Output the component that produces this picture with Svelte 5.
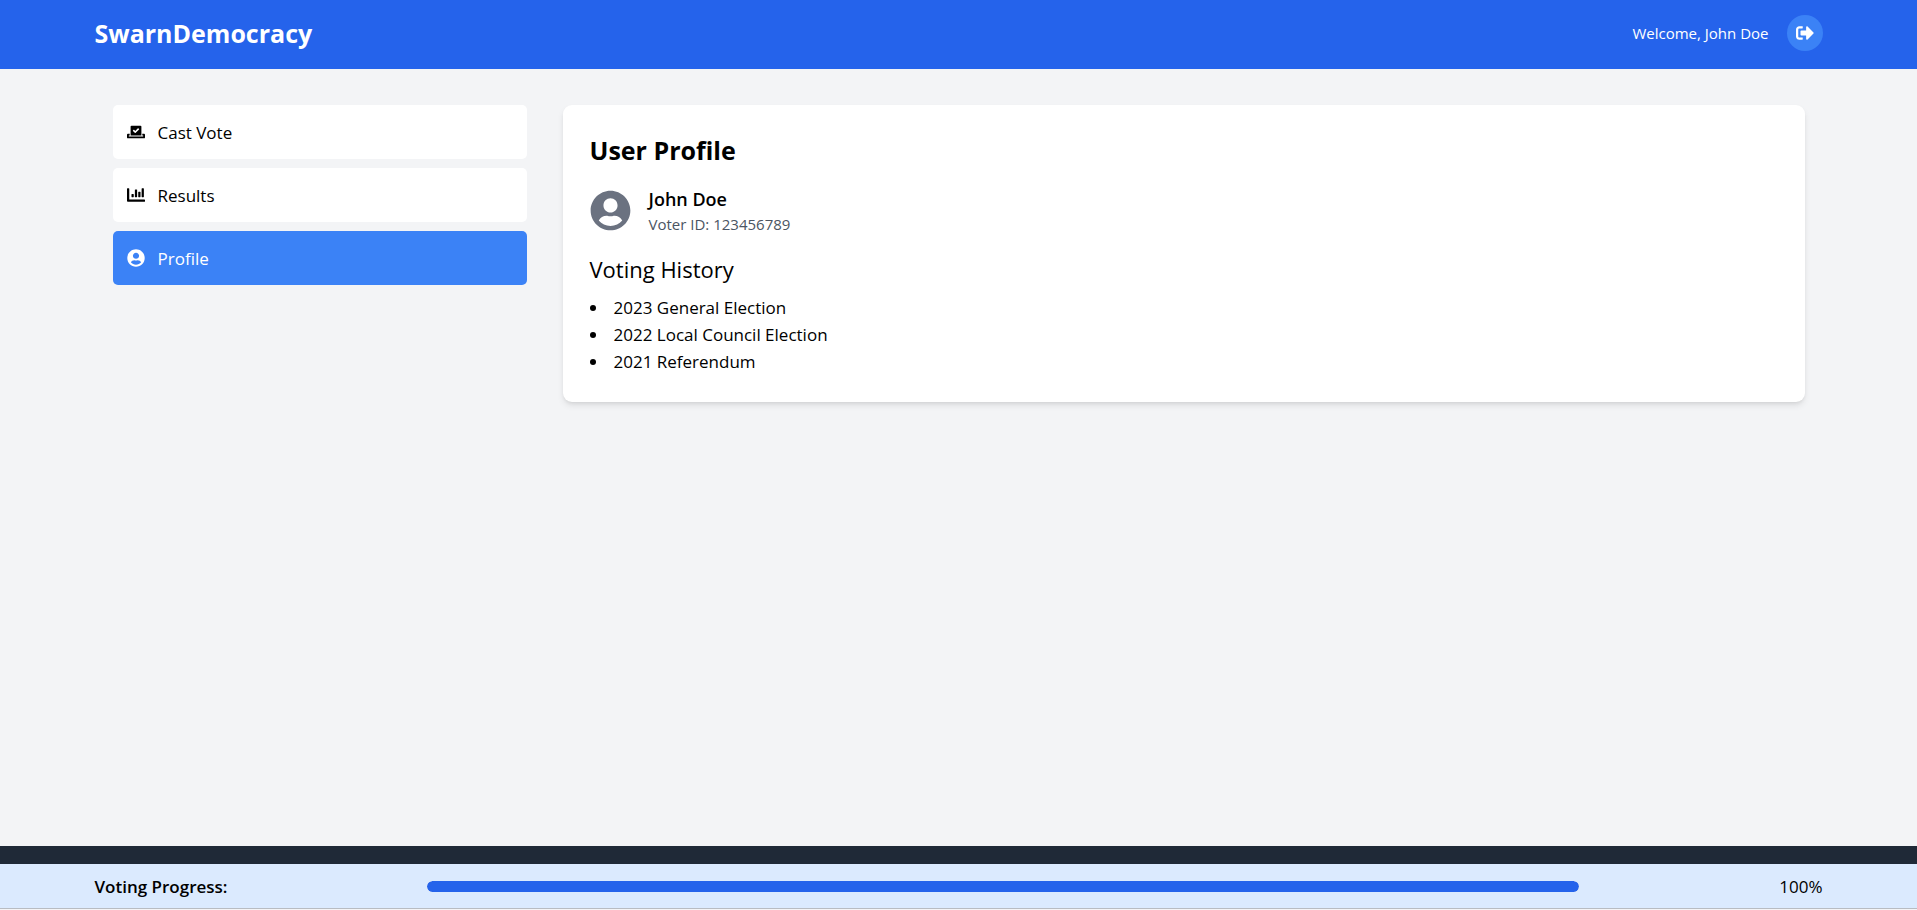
<script>
  const icons = {
    vote: {
      box: '0 0 640 512',
      d: 'M608 320h-64v64h22.4c5.3 0 9.6 3.6 9.6 8v16c0 4.4-4.3 8-9.6 8H73.6c-5.3 0-9.6-3.6-9.6-8v-16c0-4.4 4.3-8 9.6-8H96v-64H32c-17.7 0-32 14.3-32 32v96c0 17.7 14.3 32 32 32h576c17.7 0 32-14.3 32-32v-96c0-17.7-14.3-32-32-32zm-96 64V64.3c0-17.9-14.5-32.3-32.3-32.3H160.4C142.5 32 128 46.5 128 64.3V384h384zM211.2 202l25.5-25.3c4.2-4.2 11-4.2 15.2.1l41.3 41.6 95.2-94.4c4.2-4.2 11-4.2 15.2.1l25.3 25.5c4.2 4.2 4.2 11-.1 15.2L300.5 292c-4.2 4.2-11 4.2-15.2-.1l-74.1-74.7c-4.3-4.2-4.2-11 0-15.2z'
    },
    chart: {
      box: '0 0 512 512',
      d: 'M332.8 320h38.4c6.4 0 12.8-6.4 12.8-12.8V172.8c0-6.4-6.4-12.8-12.8-12.8h-38.4c-6.4 0-12.8 6.4-12.8 12.8v134.4c0 6.4 6.4 12.8 12.8 12.8zm96 0h38.4c6.4 0 12.8-6.4 12.8-12.8V76.8c0-6.4-6.4-12.8-12.8-12.8h-38.4c-6.4 0-12.8 6.4-12.8 12.8v230.4c0 6.4 6.4 12.8 12.8 12.8zm-288 0h38.4c6.4 0 12.8-6.4 12.8-12.8v-70.4c0-6.4-6.4-12.8-12.8-12.8h-38.4c-6.4 0-12.8 6.4-12.8 12.8v70.4c0 6.4 6.4 12.8 12.8 12.8zm96 0h38.4c6.4 0 12.8-6.4 12.8-12.8V108.8c0-6.4-6.4-12.8-12.8-12.8h-38.4c-6.4 0-12.8 6.4-12.8 12.8v198.4c0 6.4 6.4 12.8 12.8 12.8zM496 384H64V80c0-8.84-7.16-16-16-16H16C7.16 64 0 71.16 0 80v336c0 17.67 14.33 32 32 32h464c8.84 0 16-7.16 16-16v-32c0-8.84-7.16-16-16-16z'
    },
    user: {
      box: '0 0 496 512',
      d: 'M248 8C111 8 0 119 0 256s111 248 248 248 248-111 248-248S385 8 248 8zm0 96c48.6 0 88 39.4 88 88s-39.4 88-88 88-88-39.4-88-88 39.4-88 88-88zm0 344c-58.7 0-111.3-26.6-146.5-68.2 18.8-35.4 55.6-59.8 98.5-59.8 2.4 0 4.8.4 7.1 1.1 13 4.2 26.6 6.9 40.9 6.9 14.3 0 28-2.7 40.9-6.9 2.3-.7 4.7-1.1 7.1-1.1 42.9 0 79.7 24.4 98.5 59.8C359.3 421.4 306.7 448 248 448z'
    },
    logout: {
      box: '0 0 512 512',
      d: 'M497 273L329 441c-15 15-41 4.5-41-17v-96H152c-13.3 0-24-10.7-24-24v-96c0-13.3 10.7-24 24-24h136V88c0-21.4 25.9-32 41-17l168 168c9.3 9.4 9.3 24.6 0 34zM192 436v-40c0-6.6-5.4-12-12-12H96c-17.7 0-32-14.3-32-32V160c0-17.7 14.3-32 32-32h84c6.6 0 12-5.4 12-12V76c0-6.6-5.4-12-12-12H96c-53 0-96 43-96 96v192c0 53 43 96 96 96h84c6.6 0 12-5.4 12-12z'
    }
  };

  const tabs = [
    { id: 'vote', label: 'Cast Vote', icon: 'vote' },
    { id: 'results', label: 'Results', icon: 'chart' },
    { id: 'profile', label: 'Profile', icon: 'user' }
  ];
  const history = ['2023 General Election', '2022 Local Council Election', '2021 Referendum'];

  let active = $state('profile');
  let progress = $state(100);
</script>

{#snippet icon(name)}
  <svg class="icon" viewBox={icons[name].box} fill="currentColor" aria-hidden="true">
    <path d={icons[name].d} />
  </svg>
{/snippet}

<div class="page">
  <header>
    <div class="container bar">
      <h1>SwarnDemocracy</h1>
      <div class="account">
        <span>Welcome, John Doe</span>
        <button class="logout" aria-label="Log out">{@render icon('logout')}</button>
      </div>
    </div>
  </header>

  <main class="container">
    <nav>
      {#each tabs as tab (tab.id)}
        <button class="tab" class:active={active === tab.id} onclick={() => (active = tab.id)}>
          {@render icon(tab.icon)}
          <span>{tab.label}</span>
        </button>
      {/each}
    </nav>

    <section class="card">
      <h2>User Profile</h2>
      <div class="person">
        <span class="avatar">{@render icon('user')}</span>
        <div>
          <p class="name">John Doe</p>
          <p class="voter">Voter ID: 123456789</p>
        </div>
      </div>
      <h3>Voting History</h3>
      <ul>
        {#each history as item}
          <li>{item}</li>
        {/each}
      </ul>
    </section>
  </main>

  <div class="strip"></div>
  <footer>
    <div class="container bar">
      <span class="label" id="progress-label">Voting Progress:</span>
      <div
        class="track"
        role="progressbar"
        aria-labelledby="progress-label"
        aria-valuenow={progress}
        aria-valuemin="0"
        aria-valuemax="100"
      >
        <div class="fill" style="width: {progress}%"></div>
      </div>
      <span>{progress}%</span>
    </div>
  </footer>
</div>

<style>
  :global(body) {
    background: #f3f4f6;
  }
  .page {
    display: flex;
    flex-direction: column;
    box-sizing: border-box;
    min-height: 100vh;
    padding-bottom: 1px;
    background: #f3f4f6;
    font-family: 'Segoe UI', 'Open Sans', sans-serif;
    font-size: 17px;
    line-height: 27px;
    color: #000;
  }
  h1, h2, h3, p, ul {
    margin: 0;
    padding: 0;
  }
  button {
    border: 0;
    font: inherit;
    color: inherit;
    cursor: pointer;
  }
  .container {
    box-sizing: border-box;
    width: 100%;
    max-width: 1728px;
    margin: 0 auto;
  }
  .bar {
    display: flex;
    align-items: center;
    justify-content: space-between;
  }
  .icon {
    display: block;
    flex: none;
    width: 18px;
    height: 18px;
  }
  header {
    padding: 15px 18px 18px;
    background: #2563eb;
    color: #fff;
  }
  h1, h2 {
    font-size: 25px;
    line-height: 36px;
    font-weight: 700;
  }
  .account {
    display: flex;
    align-items: center;
    gap: 18px;
    font-size: 15px;
  }
  .logout {
    padding: 9px;
    border-radius: 50%;
    background: #3b82f6;
  }
  main {
    flex: 1;
    display: grid;
    grid-template-columns: 1fr 3fr;
    align-items: start;
    gap: 36px;
    padding: 36px 18px;
  }
  nav {
    display: flex;
    flex-direction: column;
    gap: 9px;
  }
  .tab {
    display: flex;
    align-items: center;
    gap: 13px;
    height: 54px;
    padding: 0 14px;
    border-radius: 5px;
    background: #fff;
    text-align: left;
  }
  .tab.active {
    background: #3b82f6;
    color: #fff;
  }
  .card {
    padding: 27px;
    border-radius: 9px;
    background: #fff;
    box-shadow: 0 4px 7px -1px rgb(0 0 0 / 0.1), 0 2px 4px -2px rgb(0 0 0 / 0.1);
  }
  .person {
    display: flex;
    align-items: center;
    gap: 18px;
    margin: 18px 0;
  }
  .avatar {
    color: #6b7280;
  }
  .avatar .icon {
    width: 41px;
    height: 41px;
  }
  .name {
    font-size: 18px;
    font-weight: 600;
  }
  .voter {
    font-size: 15px;
    line-height: 22px;
    color: #4b5563;
  }
  h3 {
    margin-bottom: 9px;
    font-size: 22px;
    line-height: 32px;
    font-weight: 500;
  }
  ul {
    list-style: disc inside;
  }
  .strip {
    height: 18px;
    background: #1f2937;
  }
  footer {
    padding: 9px 18px 8px;
    border-bottom: 1px solid #b8bcc2;
    background: #dbeafe;
  }
  .label {
    font-weight: 600;
  }
  .track {
    width: 66.6667%;
    height: 11px;
    border-radius: 6px;
    overflow: hidden;
    background: #e5e7eb;
  }
  .fill {
    height: 100%;
    border-radius: 6px;
    background: #2563eb;
  }
</style>
